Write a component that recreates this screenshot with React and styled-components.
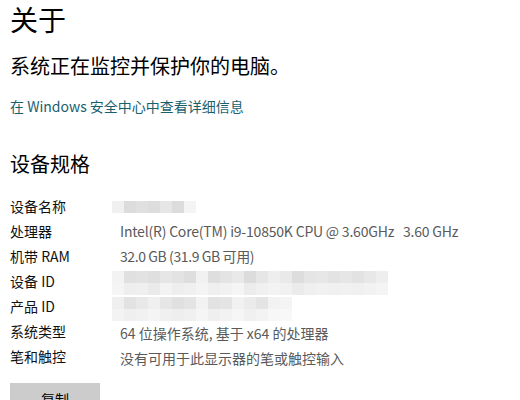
import React from 'react';
import styled, { createGlobalStyle } from 'styled-components';

const GlobalStyle = createGlobalStyle`
  html, body {
    margin: 0;
    padding: 0;
    background: #ffffff;
  }
  body {
    font-family: "Noto Sans CJK SC", "Noto Sans", sans-serif;
    color: #000000;
  }
`;

const specs = [
  { label: '设备名称' },
  { label: '处理器', value: 'Intel(R) Core(TM) i9-10850K CPU @ 3.60GHz\u00a0\u00a0\u00a03.60 GHz' },
  { label: '机带 RAM', value: '32.0 GB (31.9 GB 可用)' },
  { label: '设备 ID' },
  { label: '产品 ID' },
  { label: '系统类型', value: '64 位操作系统, 基于 x64 的处理器' },
  { label: '笔和触控', value: '没有可用于此显示器的笔或触控输入' }
];

const nameShades = ['#f0f0f0', '#dcdcdc', '#e0e0e0', '#dddddd', '#e6e6e6', '#dcdcdc', '#f4f4f4'];

const idShades = [
  ['#f3f3f3', '#e0e0e0', '#e2e2e2', '#dfdfdf', '#e6e6e6', '#e3e3e3', '#dedede', '#f1f1f1', '#dedede', '#e4e4e4', '#e9e9e9', '#dcdcdc', '#e6e6e6', '#eeeeee', '#e9e9e9', '#dddddd', '#e5e5e5', '#e7e7e7', '#e3e3e3', '#e6e6e6', '#e2e2e2', '#e8e8e8', '#eeeeee'],
  ['#f5f5f5', '#eeeeee', '#efefef', '#eaeaea', '#f3f3f3', '#eeeeee', '#f0f0f0', '#f4f4f4', '#efefef', '#f2f2f2', '#f5f5f5', '#ececec', '#f0f0f0', '#f3f3f3', '#f1f1f1', '#ebebeb', '#efefef', '#f1f1f1', '#f0f0f0', '#f1f1f1', '#f0f0f0', '#f2f2f2', '#f4f4f4'],
  ['#efefef', '#e2e2e2', '#e8e8e8', '#efefef', '#e6e6e6', '#e0e0e0', '#e4e4e4', '#f2f2f2', '#e2e2e2', '#e4e4e4', '#f1f1f1', '#ebebeb', '#e4e4e4', '#f2f2f2', '#f4f4f4'],
  ['#f3f3f3', '#efefef', '#f1f1f1', '#f4f4f4', '#f0f0f0', '#eeeeee', '#f0f0f0', '#f5f5f5', '#efefef', '#f2f2f2', '#f6f6f6', '#f0f0f0', '#f3f3f3', '#f7f7f7', '#f8f8f8']
];

const App = () => {
  return (
    <>
      <GlobalStyle />
      <Page>
        <Title>关于</Title>
        <Subtitle>系统正在监控并保护你的电脑。</Subtitle>
        <Link>在 Windows 安全中心中查看详细信息</Link>
        <Heading>设备规格</Heading>
        <SpecWrap>
          <Labels>
            {specs.map((s) => (
              <Label key={s.label}>{s.label}</Label>
            ))}
          </Labels>
          <Values>
            <Value>
              <Mosaic>
                {nameShades.map((c, i) => (
                  <Cell key={i} $shade={c} />
                ))}
              </Mosaic>
            </Value>
            <Value $tight={0.2}>{specs[1].value}</Value>
            <Value $tight={0.4}>{specs[2].value}</Value>
            <IdMosaic>
              {idShades.map((row, r) => (
                <Mosaic key={r}>
                  {row.map((c, i) => (
                    <Cell key={i} $shade={c} />
                  ))}
                </Mosaic>
              ))}
            </IdMosaic>
            <Value>{specs[5].value}</Value>
            <Value>{specs[6].value}</Value>
          </Values>
        </SpecWrap>
        <CopyButton>复制</CopyButton>
      </Page>
    </>
  );
};

export default App;

const Page = styled.div`
  padding: 1px 0 0 10px;
  width: 510px;
  height: 399px;
  overflow: hidden;
`;

const Title = styled.h1`
  margin: 0;
  font-size: 28px;
  line-height: 36px;
  font-weight: 400;
`;

const Subtitle = styled.p`
  margin: 15px 0 0;
  font-size: 20px;
  line-height: 28px;
`;

const Link = styled.a`
  display: block;
  margin-top: 16px;
  font-size: 14px;
  line-height: 20px;
  color: #19606f;
  cursor: pointer;
`;

const Heading = styled.h2`
  margin: 34px 0 0;
  font-size: 20px;
  line-height: 28px;
  font-weight: 400;
`;

const SpecWrap = styled.div`
  display: flex;
  margin-top: 16px;
  font-size: 14px;
  line-height: 25px;
`;

const Labels = styled.div`
  width: 110px;
  display: flex;
  flex-direction: column;
`;

const Label = styled.div`
  color: #111111;
`;

const Values = styled.div`
  display: flex;
  flex-direction: column;
`;

const Value = styled.div`
  height: 25px;
  color: #5a5a5a;
  letter-spacing: ${(p) => (p.$tight ? `-${p.$tight}px` : 'normal')};
  white-space: nowrap;
  display: flex;
  align-items: center;
`;

const Mosaic = styled.div`
  display: flex;
  height: 12px;
  margin-left: -8px;
`;

const IdMosaic = styled.div`
  height: 50px;
  display: flex;
  flex-direction: column;
  justify-content: center;
  padding-top: 2px;
  filter: blur(0.6px);

  ${Mosaic}:nth-child(3) {
    margin-top: 2px;
  }
`;

const Cell = styled.span`
  width: 12px;
  height: 12px;
  flex: none;
  background: ${(p) => p.$shade};
`;

const CopyButton = styled.button`
  display: block;
  margin-top: 12px;
  width: 90px;
  height: 32px;
  padding: 0;
  border: none;
  background: #cccccc;
  font-family: inherit;
  font-size: 14px;
  color: #000000;
`;
